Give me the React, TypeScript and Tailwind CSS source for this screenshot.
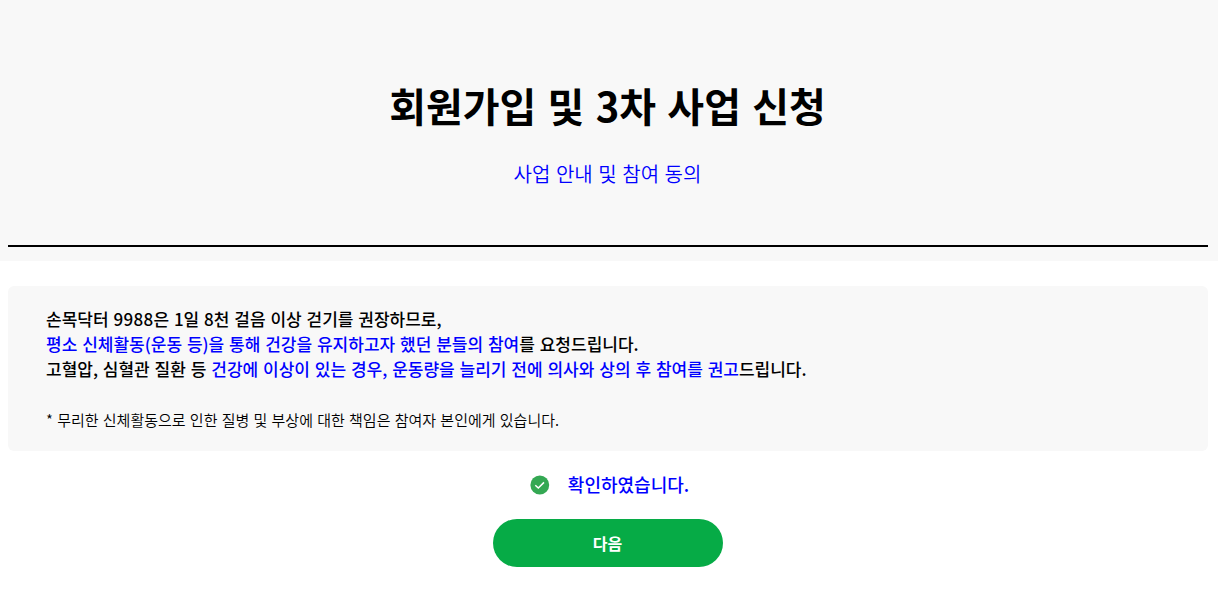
const FONT = "font-['Noto_Sans_CJK_KR',sans-serif]";

export default function App() {
  return (
    <div className={`h-[610px] w-full overflow-hidden bg-white text-black ${FONT}`}>
      {/* Page heading */}
      <header className="h-[261px] bg-[#f8f8f8] px-2 pt-[75px] pr-2.5">
        <div className="h-[172px] border-b-2 border-black text-center">
          <h1 className="pr-px text-[40px] leading-[60px] font-bold [word-spacing:2.2px]">
            회원가입 및 3차 사업 신청
          </h1>
          <p className="mt-6 pr-px text-[20px] leading-[30px] font-[350] text-[#0000ff] [word-spacing:1.1px]">
            사업 안내 및 참여 동의
          </p>
        </div>
      </header>

      <main className="pt-[25px] pr-2.5 pl-2">
        {/* Health notice */}
        <section className="h-[165px] rounded-md bg-[#f8f8f8] px-[38px] pt-5">
          <div className="text-[17px] leading-[25px] font-medium [word-spacing:1.03px]">
            <p>
              손목닥터 <span className="tracking-[0.3px]">9988</span>은 1일 8천 걸음 이상 걷기를
              권장하므로,
            </p>
            <p>
              <span className="text-[#0000ff]">
                평소 신체활동(운동 등)을 통해 건강을 유지하고자 했던 분들의 참여
              </span>
              를 요청드립니다.
            </p>
            <p>
              고혈압, 심혈관 질환 등{" "}
              <span className="text-[#0000ff]">
                건강에 이상이 있는 경우, 운동량을 늘리기 전에 의사와 상의 후 참여를 권고
              </span>
              드립니다.
            </p>
          </div>
          <p className="mt-[26px] text-[15px] leading-[25px] font-[350] [word-spacing:0.9px]">
            * 무리한 신체활동으로 인한 질병 및 부상에 대한 책임은 참여자 본인에게 있습니다.
          </p>
        </section>

        {/* Confirmation */}
        <label className="mt-5 flex h-[26px] items-center justify-center gap-[18px] pl-[3px]">
          <svg className="mt-px size-5" viewBox="0 0 20 20" fill="none">
            <circle cx="9.8" cy="10" r="9.4" fill="#34a853" />
            <path d="M5.3 10.2l3 2.8 5.7-5.6" stroke="white" strokeWidth="1.5" />
          </svg>
          <span className="text-[18px] leading-[26px] font-medium text-[#0000ff]">확인하였습니다.</span>
        </label>
        <button className="mx-auto mt-[22px] block h-12 w-[230px] rounded-full bg-[#06ab46] pr-px text-[16px] font-bold text-white">
          다음
        </button>
      </main>
    </div>
  );
}
